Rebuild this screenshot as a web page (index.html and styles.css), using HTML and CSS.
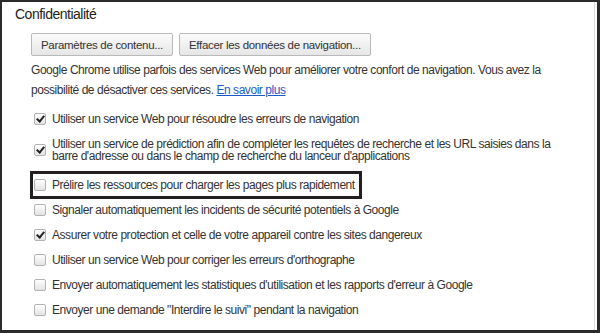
FILE: index.html
```html
<!DOCTYPE html>
<html lang="fr">
<head>
    <meta charset="UTF-8">
    <meta name="viewport" content="width=device-width, initial-scale=1.0">
    <title>Confidentialité</title>
    <link rel="stylesheet" href="styles.css">
</head>
<body>
    <div class="frame">
        <section class="section">
            <h3 class="section-title">Confidentialité</h3>
            <div class="section-body">
                <div class="buttons">
                    <button class="btn">Paramètres de contenu...</button>
                    <button class="btn">Effacer les données de navigation...</button>
                </div>
                <p class="note">Google Chrome utilise parfois des services Web pour améliorer votre confort de navigation. Vous avez la possibilité de désactiver ces services. <a href="#">En savoir plus</a></p>
                <ul class="options">
                    <li class="option"><span class="checkbox checked"></span><span class="label">Utiliser un service Web pour résoudre les erreurs de navigation</span></li>
                    <li class="option"><span class="checkbox checked"></span><span class="label">Utiliser un service de prédiction afin de compléter les requêtes de recherche et les URL saisies dans la barre d'adresse ou dans le champ de recherche du lanceur d'applications</span></li>
                    <li class="option highlight"><span class="checkbox"></span><span class="label">Prélire les ressources pour charger les pages plus rapidement</span></li>
                    <li class="option"><span class="checkbox"></span><span class="label">Signaler automatiquement les incidents de sécurité potentiels à Google</span></li>
                    <li class="option"><span class="checkbox checked"></span><span class="label">Assurer votre protection et celle de votre appareil contre les sites dangereux</span></li>
                    <li class="option"><span class="checkbox"></span><span class="label">Utiliser un service Web pour corriger les erreurs d'orthographe</span></li>
                    <li class="option"><span class="checkbox"></span><span class="label">Envoyer automatiquement les statistiques d'utilisation et les rapports d'erreur à Google</span></li>
                    <li class="option"><span class="checkbox"></span><span class="label">Envoyer une demande "Interdire le suivi" pendant la navigation</span></li>
                </ul>
            </div>
        </section>
    </div>
</body>
</html>
```

FILE: styles.css
```css
body {
    margin: 0;
    font-family: "Liberation Sans", Arial, sans-serif;
    color: #333;
    background: #fff;
}
.frame {
    width: 600px;
    height: 333px;
    box-sizing: border-box;
    border: 2px solid #2b2b2b;
    border-right-width: 3px;
    border-bottom-width: 3px;
    overflow: hidden;
}
.section {
    padding: 4px 0 0 13px;
    box-shadow: inset -2px 0 0 #fff, inset -3px 0 0 #ddd;
    height: 100%;
    box-sizing: border-box;
}
.section-title {
    margin: 0;
    font-size: 14px;
    font-weight: normal;
    letter-spacing: -0.5px;
    color: #222;
    line-height: 16px;
}
.section-body {
    padding-left: 16px;
    width: 530px;
    letter-spacing: -0.45px;
}
.buttons {
    display: flex;
    gap: 6px;
    margin-top: 11px;
}
.btn {
    height: 23px;
    padding: 0 9px;
    font-family: inherit;
    font-size: 11.5px;
    letter-spacing: -0.3px;
    color: #333;
    border: 1px solid #b9b9b9;
    border-radius: 2px;
    background: linear-gradient(#fbfbfb, #e6e6e6);
}
.note {
    margin: 4px 0 0;
    font-size: 12px;
    line-height: 20px;
}
.note a {
    color: #1a5bc9;
}
.options {
    list-style: none;
    margin: 13px 0 0;
    padding: 0;
}
.option {
    display: flex;
    align-items: center;
    gap: 6px;
    padding-left: 3px;
    font-size: 12px;
    line-height: 12px;
    margin-bottom: 13px;
}
.checkbox {
    flex: none;
    width: 10px;
    height: 10px;
    border: 1px solid #b3b3b3;
    border-radius: 2px;
    background: linear-gradient(#fff, #e3e3e3);
    position: relative;
}
.checkbox.checked::after {
    content: "";
    position: absolute;
    left: 3px;
    top: 0;
    width: 3px;
    height: 6px;
    border: solid #222;
    border-width: 0 2px 2px 0;
    transform: rotate(40deg);
}
.option.highlight {
    width: fit-content;
    margin: -4px 0 5px -1px;
    padding: 5px 4px 5px 1px;
    border: 3px solid #231f20;
}
```
